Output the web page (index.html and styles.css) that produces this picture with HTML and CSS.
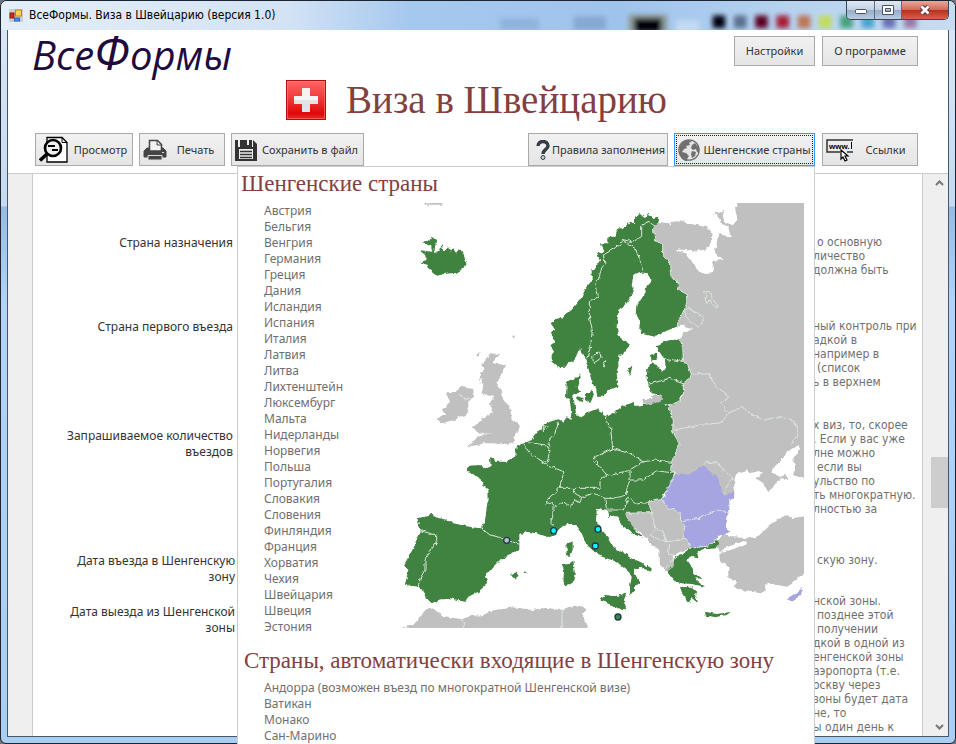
FILE: index.html
```html
<!DOCTYPE html>
<html lang="ru">
<head>
<meta charset="utf-8">
<title>ВсеФормы. Виза в Швейцарию (версия 1.0)</title>
<link rel="stylesheet" href="styles.css">
</head>
<body>
<div class="window">
  <svg class="glass" width="620" height="30" viewBox="0 0 620 30" aria-hidden="true">
    <defs><filter id="soft" x="-20%" y="-50%" width="140%" height="200%"><feGaussianBlur stdDeviation="3"/></filter></defs>
    <g filter="url(#soft)">
      <rect x="160" y="18" width="40" height="12" fill="#8fb2dc"/><rect x="236" y="16" width="34" height="14" fill="#86a8d2"/>
      <rect x="293" y="14" width="40" height="18" fill="#8e9a96"/><rect x="299" y="18" width="28" height="14" fill="#000008"/>
      <rect x="342" y="20" width="24" height="14" fill="#c4daf2"/>
      <rect x="380" y="15" width="13" height="13" fill="#00060c"/><rect x="402" y="15" width="13" height="13" fill="#5b6f8b"/>
      <rect x="424" y="15" width="13" height="13" fill="#5c001e"/><rect x="446" y="15" width="13" height="13" fill="#a51a35"/>
      <rect x="468" y="15" width="13" height="13" fill="#bb7652"/><rect x="490" y="15" width="13" height="13" fill="#c2dc5c"/>
      <rect x="512" y="15" width="13" height="13" fill="#42a17b"/><rect x="534" y="15" width="13" height="13" fill="#4aa2d0"/>
      <rect x="556" y="15" width="13" height="13" fill="#6670b4"/><rect x="578" y="15" width="13" height="13" fill="#9a78a8"/>
    </g>
  </svg>
  <div class="titlebar">
    <svg width="14" height="13" viewBox="0 0 14 13" aria-hidden="true">
      <rect width="14" height="13" fill="#c9cdd2"/>
      <rect x="1" y="4" width="4" height="5" fill="#d22a1c" stroke="#8b1a10"/>
      <rect x="6.500" y="1" width="6" height="6" fill="#fbd24a" stroke="#b98a10"/>
      <rect x="5.500" y="9" width="5" height="3" fill="#4b8ff0" stroke="#2c62b8"/>
    </svg>
    <span class="caption">ВсеФормы. Виза в Швейцарию (версия 1.0)</span>
    <div class="controls">
      <button class="ctl min" aria-label="Свернуть"><svg width="14" height="12" viewBox="0 0 14 12"><rect x="1.500" y="5.500" width="11" height="4" rx="1" fill="#fff" stroke="#4a5468"/></svg></button>
      <button class="ctl max" aria-label="Развернуть"><svg width="14" height="12" viewBox="0 0 14 12"><path fill="#fff" fill-rule="evenodd" stroke="#4a5468" d="M1.500 1.500h11v9h-11zM4.500 4.500h5v3h-5z"/></svg></button>
      <button class="ctl close" aria-label="Закрыть"><svg width="14" height="12" viewBox="0 0 14 12"><path d="M3.500 2.500l7 7m0-7l-7 7" stroke="#5a3038" stroke-width="4.600"/><path d="M3.500 2.500l7 7m0-7l-7 7" stroke="#fff" stroke-width="2.800"/></svg></button>
    </div>
  </div>
  <div class="client">
    <header>
      <div class="top">
        <div class="logo">Все<span class="big">Ф</span>ормы</div>
        <div class="group"><button class="btn settings">Настройки</button><button class="btn about">О программе</button></div>
      </div>
      <div class="heading">
        <svg width="40" height="40" viewBox="0 0 40 40" aria-hidden="true">
          <defs><linearGradient id="red" x2="0" y2="1"><stop stop-color="#ff6666"/><stop offset=".5" stop-color="#f03434"/><stop offset=".85" stop-color="#de0909"/><stop offset="1" stop-color="#e83030"/></linearGradient></defs>
          <rect x=".5" y=".5" width="39" height="39" fill="url(#red)" stroke="#b80d0d"/>
          <rect x="1.500" y="1.500" width="37" height="37" fill="none" stroke="#ff8a8a" stroke-opacity=".5"/>
          <path d="M16 8h8v8h8v8h-8v8h-8v-8H8v-8h8z" fill="#f4f4f4"/><path d="M8 20h24v4h-8v8h-8v-8H8z" fill="#e3e3e3"/>
        </svg>
        <h1>Виза в Швейцарию</h1>
      </div>
      <nav class="toolbar">
        <div class="group">
          <button class="btn tool view">
            <svg width="30" height="28" viewBox="0 0 30 28"><path d="M8 1.500h15l5 5V26H8z" fill="#fff" stroke="#000" stroke-width="1.300"/><path d="M23 1.500v5h5" fill="none" stroke="#000"/><circle cx="14" cy="12" r="8" fill="#eee" stroke="#000" stroke-width="2.600"/><path d="M8 18l-7 6.500" stroke="#000" stroke-width="3.500"/><path d="M9 10h7M13 14h6" stroke="#000" stroke-width="1.800"/></svg>
            <span>Просмотр</span></button>
          <button class="btn tool print">
            <svg width="24" height="22" viewBox="0 0 24 22"><path d="M4 9h16l3 3v6H1v-6z" fill="#444" stroke="#444" stroke-linejoin="round"/><path d="M6.500 12V1.500h8l4 4V12z" fill="#f3f3f3" stroke="#444" stroke-width="1.500"/><path d="M14 1.500V6h4.500" fill="none" stroke="#444"/><path d="M5 16.500h14V21H5z" fill="#444" stroke="#ddd"/><path d="M19 13.500h2" stroke="#ddd"/></svg>
            <span>Печать</span></button>
          <button class="btn tool save">
            <svg width="22" height="22" viewBox="0 0 22 22"><path d="M0 1h18l4 4v17H0z" fill="#333"/><path d="M3 0h2v8H3zM17 0h1v8h-1z" fill="#eee"/><path d="M12 1h2v5h-2z" fill="#eee"/><path d="M4 10h14v10H4z" fill="#eee"/><path d="M5 12.500h12M5 15.500h12M5 18.500h12" stroke="#333" stroke-width="1.400"/></svg>
            <span>Сохранить в файл</span></button>
        </div>
        <div class="group">
          <button class="btn tool rules">
            <svg width="14" height="20" viewBox="0 0 14 20"><path d="M2 6c0-6 10-6 10 0 0 3.500-5 3.500-5 8" fill="none" stroke="#343c46" stroke-width="3.400"/><circle cx="7" cy="17.500" r="2" fill="#ccc" stroke="#343c46"/></svg>
            <span>Правила заполнения</span></button>
          <button class="btn tool schengen">
            <svg width="22" height="22" viewBox="0 0 22 22"><circle cx="11" cy="11" r="10.200" fill="#e4e4e4" stroke="#707070" stroke-width="1.200"/><path d="M2 7l3-4 5-2 4 1-3 2 1 2-4 1 1 2-3 1-2 3 4 1 3 3-2 3v3l-5-3-3-6zM14 6l3-2 4 5v5l-2-1-1-3-3 1-2-2zM14 12l4 1-1 4-3 2-1-4z" fill="#707070"/></svg>
            <span>Шенгенские страны</span></button>
          <button class="btn tool links">
            <svg width="28" height="24" viewBox="0 0 28 24"><path d="M27 2H1v12h13M21 14h6" fill="none" stroke="#333" stroke-width="1.500"/><text x="3" y="11" class="www">www.</text><path d="M25.500 4v7" stroke="#000"/><path d="M15 12v9l2-2 2 4 2-1-2-4h3z" fill="#fff" stroke="#000" stroke-width="1.200"/></svg>
            <span>Ссылки</span></button>
        </div>
      </nav>
    </header>
    <main>
      <div class="form">
        <section class="row r1"><p class="label">Страна назначения</p>
          <p class="hint"><span class="in">о основную</span><span>личество</span><span>должна быть</span></p></section>
        <section class="row r2"><p class="label">Страна первого въезда</p>
          <p class="hint"><span>ный контроль при</span><span>адкой в</span><span>например в</span><span class="in">(список</span><span>ь в верхнем</span></p></section>
        <section class="row r3"><p class="label low">Запрашиваемое количество въездов</p>
          <p class="hint"><span>х виз, то, скорее</span><span>. Если у вас уже</span><span>лне можно</span><span class="in">если вы</span><span>ульство по</span><span>ть многократную.</span><span>лностью за</span></p></section>
        <section class="row r4"><p class="label wide">Дата въезда в Шенгенскую зону</p>
          <p class="hint"><span class="in">скую зону.</span></p></section>
        <section class="row r5"><p class="label wide low">Дата выезда из Шенгенской зоны</p>
          <p class="hint"><span>нской зоны.</span><span class="in">позднее этой</span><span class="in">получении</span><span>дкой в одной из</span><span>енгенской зоны</span><span>аэропорта (т.е.</span><span>оскву через</span><span>зоны будет дата</span><span>не, то</span><span>ы один день к</span></p></section>
      </div>
      <div class="scroll" aria-hidden="true">
        <svg width="9" height="6" viewBox="0 0 9 6"><path d="M1 5l3.500-3.500L8 5" fill="none" stroke="#777" stroke-width="2"/></svg>
        <div class="track"><div class="thumb"></div></div>
        <svg width="9" height="6" viewBox="0 0 9 6"><path d="M1 1l3.500 3.500L8 1" fill="none" stroke="#777" stroke-width="2"/></svg>
      </div>
    </main>
  </div>
  <aside class="popup">
    <h2>Шенгенские страны</h2>
    <div class="countries">
      <ul>
        <li>Австрия</li><li>Бельгия</li><li>Венгрия</li><li>Германия</li><li>Греция</li><li>Дания</li><li>Исландия</li><li>Испания</li><li>Италия</li><li>Латвия</li><li>Литва</li><li>Лихтенштейн</li><li>Люксембург</li><li>Мальта</li><li>Нидерланды</li><li>Норвегия</li><li>Польша</li><li>Португалия</li><li>Словакия</li><li>Словения</li><li>Финляндия</li><li>Франция</li><li>Хорватия</li><li>Чехия</li><li>Швейцария</li><li>Швеция</li><li>Эстония</li>
      </ul>
      <svg class="map" width="401" height="425" viewBox="9 9 1203 1275" role="img" aria-label="Карта Шенгенской зоны">
        <defs><filter id="coast" filterUnits="userSpaceOnUse" x="0" y="0" width="1230" height="1300"><feTurbulence type="fractalNoise" baseFrequency=".07" numOctaves="2" seed="4"/><feDisplacementMap in="SourceGraphic" scale="13" xChannelSelector="R" yChannelSelector="G"/></filter></defs>
        <g filter="url(#coast)">
          <g fill="#c0c0c0">
            <path d="M1016 0L1005 22L1012 60L998 76L975 66L968 50L972 30L950 38L938 40L955 46L962 70L985 80L992 112L965 108L955 100L950 130L944 158L968 180L935 182L942 205L938 220L918 222L892 214L885 195L870 180L855 160L820 148L860 150L885 155L915 148L935 125L938 100L922 82L885 74L860 70L835 64L812 66L810 80L805 70L775 66L760 80L764 120L788 135V165L808 190L812 225L835 250L834 266L863 285L858 315L845 345L830 380L850 372L856 382L877 388L850 398L840 418L848 440L850 480L865 500L874 522L868 540L850 548V590L840 600L820 615H805L820 655L818 695L838 730L825 755L812 790V820H825L970 890L1003 875V838L1015 820L1035 815L1040 808L1050 820L1080 812L1088 822L1068 835L1090 850L1105 877L1125 850L1145 835L1165 838L1160 825L1140 830L1115 818L1118 805L1145 780L1160 760L1180 745L1195 738L1200 745L1180 775L1185 800L1180 825L1195 832L1230 838V0Z"/>
            <path d="M727 597L755 597L760 585H785V608L745 614L730 612ZM672 940L755 938L745 905L780 895L850 930L870 1045L840 1055L815 1070L820 1090L805 1118L780 1095L778 1050L755 1035L745 1015L720 1000L690 975Z"/>
            <path d="M970 1000L1000 1012L1045 1015L1025 1025L985 1040L960 1058L950 1030ZM958 1062L975 1055L1000 1048L1040 1030L1025 1018L1070 1010L1090 995L1120 965L1160 945L1170 955L1230 948V1115L1205 1125L1160 1160L1100 1148L1095 1175L1070 1178L1030 1170L1000 1160L1010 1148L985 1130V1100L960 1085Z"/>
            <path d="M270 460L300 462L275 490L318 495L300 530L288 550L305 570L310 600L330 620L335 660L360 675L355 695L340 710L345 725L320 735L280 730H250L235 735L200 740L225 720L240 708L275 700L245 702L215 682L235 670L245 655L275 640L270 610L280 590L245 580L250 555L240 530L250 510L245 490L262 478Z"/>
            <path d="M110 655L140 640L125 630L150 605L138 580L165 578L180 560L220 567L222 590L205 605V640L160 660L125 670L110 660ZM228 465L242 455L235 470ZM240 530L235 555L244 530ZM60 4H142L125 14H80ZM335 410H346L340 416Z"/>
            <path d="M5 1284L40 1275L65 1245L90 1220L105 1230L130 1248L185 1258L215 1248L250 1245L285 1230L340 1222L400 1230L430 1222L480 1230L520 1218H540L560 1228L545 1245L560 1270V1300H0Z"/>
          </g>
          <g fill="#418341">
            <path d="M52 955L95 942L105 950L140 960L160 970L215 982L245 985L255 960L262 910L266 900L265 870L248 855L245 838L215 820L200 815L205 797L240 795L255 805L272 800L270 772L282 775L285 785H315L345 770L350 740L372 730L395 720L410 700L430 675L450 665L475 658L490 665L500 652L515 660L512 620L508 600L498 590L500 545L515 538L532 535L540 520L542 535L530 560L540 575L520 585L522 600L525 620L530 650L545 650L560 640L590 628L605 635L610 645L620 650L640 640L665 620L700 605L710 618L725 615L785 608L805 618L820 660L818 695L838 730L815 785L812 812L825 820L805 865L782 895L745 905L755 938L675 940L685 965L705 990L730 1015L700 1002L665 975L655 950L635 945L628 955L620 930L600 925L590 930L588 960L605 990L625 1010L640 1040L660 1055L685 1060V1070L720 1085L755 1105L752 1115L720 1100L705 1110V1125L722 1145L705 1160V1175L690 1185V1160L695 1130L685 1115L650 1085L600 1068L560 1035L545 1000L530 980L505 970L480 985L465 1002L440 1012L410 1000L380 995L358 1005V1045L330 1065L300 1080L275 1105L255 1130L265 1148L235 1175L205 1190L195 1205L150 1195L115 1200L95 1210L80 1195L75 1175L55 1160L15 1155L25 1110L12 1095L40 1045L62 995Z"/>
            <path d="M475 502L455 485V465L462 455L450 435L465 425L452 395L466 390L452 370L480 350L487 357L495 340L515 330L540 300L555 270L575 245V210L588 200L600 180L590 160L612 155L600 130L625 130V110L645 110L655 85L675 85L690 65L705 70V50L720 42L735 55L745 38L760 55L775 50L770 75L760 80L764 120L788 135V165L808 190L812 225L835 250L834 266L863 285L858 315L830 380L800 392L765 410L720 400L722 370L710 345L712 315L735 280L740 258L755 240L745 220L718 217L700 225L695 255L702 275L680 310L655 330L650 380L655 405L680 425L690 435L670 460L655 465V500L650 520L655 560L620 570L610 590H592L588 565L575 545L565 505L560 480L545 460L540 442L535 462L520 480L495 500Z"/>
            <path d="M770 436L800 422L840 418L848 440L850 480L865 500L874 522L868 540L850 548V580L840 600L820 615H805L785 608V585L755 580L745 555L740 535L742 508L755 490L770 495L785 515L797 505L795 480L778 455ZM687 500L697 498L690 528L684 520ZM750 465L770 460L772 475L755 482ZM555 585L575 572L580 590L570 610L555 600ZM532 588L548 595L545 605L532 600Z"/>
            <path d="M58 187L80 180L75 165L58 150L95 155L100 145L107 160L120 148L125 135L130 152L145 142L150 155L160 148L168 158L180 145L188 160L200 185L190 205L170 218L140 221L110 228L85 208L80 195ZM66 125L88 122L95 110L108 120L104 150L95 150L93 132L85 138Z"/>
            <path d="M500 1035L518 1023V1050L510 1072L500 1060ZM485 1095L505 1092L520 1082L525 1120L518 1148L500 1158L490 1150L492 1110ZM600 1195L615 1185L650 1188L680 1178L672 1200L675 1228L655 1225L605 1202ZM333 1123L348 1117L356 1127L345 1136ZM368 1117L380 1119L376 1123ZM915 1235L950 1242L992 1236L980 1245L945 1252L918 1247Z"/>
            <path d="M820 1075L850 1060L870 1045L925 1038L945 1028L950 1018L958 1030L950 1045L910 1048L890 1055L895 1075L870 1070L862 1080L878 1105L880 1120L912 1137L885 1135L915 1160L875 1152L845 1150L825 1145L803 1118L818 1095ZM840 1162L875 1160L892 1175L885 1185L895 1210L875 1195L865 1210L855 1190L845 1175Z"/>
          </g>
          <path fill="#a5a5e1" d="M825 822L875 820L910 795L935 820L955 835L962 865L970 885L990 878L1003 875L1002 892L988 900L988 935L980 950L975 975L985 1000L955 1008L945 1025L925 1038L870 1045L865 1025L848 1010L855 980L842 960L840 935L805 925L782 898L795 885L810 845ZM1160 1198L1175 1190L1190 1178L1210 1160L1200 1185L1180 1205Z"/>
          <g fill="none" stroke="#dce7dc" stroke-width="3">
            <path d="M560 475L572 440L577 390L568 350V305L595 290L588 250L600 225L605 200L615 190L610 165L660 135L665 118L695 125L725 110V75L745 65L765 78M665 118L705 145L720 180L728 212M580 490L578 465L600 458L603 475ZM612 502L610 488L618 478Z"/>
            <path d="M760 80L764 120L788 135V165L808 190L812 225L835 250L834 266L863 285L858 315L830 380M840 418L848 440L850 480L865 500L874 522L868 540L850 548V580L840 600L805 618L820 660L818 695L838 730L815 785L812 812L825 820L805 865L782 895L745 905L755 938L675 940"/>
            <path d="M60 992L110 1005V1025L90 1055L75 1080V1110L60 1135L55 1160M245 985L270 1005L305 1013L358 1033M372 735L390 760L420 780L440 793L465 805L492 815L478 865L440 900V910L460 905L458 950L452 970L470 985M385 728L440 735L450 755L440 790M475 665L465 700L445 720L450 740M430 675L442 680L430 695ZM478 865H520L525 880L545 892L540 908L525 900L510 920L490 905L470 920L458 915M520 865H600V845L620 825L580 775L638 745M620 640V665L632 685L638 745L700 765L730 785L770 780L815 787M620 820L635 825L685 812L730 785M690 812V840L680 865V885L640 895H615L580 880L545 892M690 840H730L770 812L825 820M615 898L620 930M620 930H670L685 892L710 912L745 908M795 1108L820 1075"/>
            <path d="M795 478L835 485L850 480M748 552L810 535L850 548M874 522H925L950 560L985 590L965 610L985 640L965 668L900 675L822 690M985 640L1030 618L1040 635L1090 660L1140 650L1180 660L1195 700L1175 730M910 790L950 785L970 810L1000 835L980 860L975 880M755 938L765 985L750 1005L780 1020L800 1025L790 995L770 985M800 1025L840 1020L860 1015M805 1030V1060L820 1070M845 962L900 955L950 930L988 935M858 330L865 325L910 350L908 372L892 382L857 350ZM908 273L930 280L935 295L955 318L950 328L930 300L920 310L915 295L925 290ZM195 1284L185 1258M485 1284L487 1230M175 580L200 598L222 590M782 895L805 925L840 935L842 960L855 980L848 1010L865 1025L870 1045L925 1038L945 1025L955 1008"/>
          </g>
        </g>
        <g stroke="#173b48" stroke-width="4"><g fill="#00ffff"><circle cx="461" cy="992" r="9"/><circle cx="594" cy="988" r="9"/><circle cx="586" cy="1038" r="9"/></g><circle cx="320" cy="1021" r="9" fill="#c0c0c0"/><circle cx="654" cy="1251" r="9" fill="#418341"/></g>
      </svg>
    </div>
    <h2 class="second">Страны, автоматически входящие в Шенгенскую зону</h2>
    <ul><li>Андорра (возможен въезд по многократной Шенгенской визе)</li><li>Ватикан</li><li>Монако</li><li>Сан-Марино</li></ul>
  </aside>
</div>
</body>
</html>
```
FILE: styles.css
```css
* { box-sizing: border-box; }
html, body { height: 100%; margin: 0; }
body {
  background: #70757c;
  overflow: hidden;
  font: 12px/16px "Noto Sans", "DejaVu Sans Condensed", sans-serif;
  color: #333;
}
h1, h2, p, ul { margin: 0; padding: 0; font-weight: normal; }
ul { list-style: none; }
button { font: inherit; color: inherit; }

.window {
  position: relative;
  display: flex;
  flex-direction: column;
  height: 100%;
  padding: 0 6px 6px;
  border: 1px solid #1b2430;
  border-radius: 7px 7px 6px 6px;
  background: linear-gradient(#dbe8f6 0, #c5daf0 205px, #96bbe2 206px, #b2d3f7 300px, #aacdf2 100%);
}
.window::before {
  content: "";
  position: absolute;
  inset: 0 0 auto 0;
  height: 29px;
  border-radius: 6px 6px 0 0;
  background: linear-gradient(90deg, #e4eef8, #d3e3f5 30%, #a5c8ee 43%, #9fc4ec 65%, #b9d4f0 85%, #c8dcf2);
}
.glass { position: absolute; right: 0; top: 0; width: 620px; height: 29px; }
.titlebar { position: relative; display: flex; align-items: center; flex: none; height: 28px; padding-left: 2px; gap: 6px; }
.caption { flex: 1; color: #000; font-family: "DejaVu Sans Condensed", sans-serif; }
.controls {
  display: flex;
  align-self: flex-start;
  height: 19px;
  border: 1px solid #3c4656;
  border-top: 0;
  border-radius: 0 0 5px 5px;
  overflow: hidden;
}
.ctl {
  display: flex;
  align-items: center;
  justify-content: center;
  width: 28px;
  padding: 0;
  border: 0;
  border-right: 1px solid #5e6c80;
  background: linear-gradient(#dfe8f2, #c2d0e2 50%, #98adc6 52%, #b8cde2);
}
.ctl.max { width: 27px; }
.ctl.close { width: 46px; border-right: 0; background: linear-gradient(#e8a99c, #d5695a 48%, #b8301e 52%, #d8604a); }

.client { display: flex; flex-direction: column; flex: 1; min-height: 0; border: 1px solid #46566c; background: #fff; }
header { flex: none; height: 144px; padding: 0 30px 0 27px; border-bottom: 1px solid #ccc; }
.top { display: flex; justify-content: space-between; height: 50px; }
.logo { margin-left: -3px; color: #200b3e; font: italic 40px/44px "Open Sans", sans-serif; }
.logo .big { font-size: 48px; }
.group { display: flex; gap: 6px; }
.btn {
  display: flex;
  align-items: center;
  justify-content: center;
  height: 33px;
  padding: 0;
  border: 1px solid #a9a9a9;
  background: linear-gradient(#f1f1f1, #e5e5e5);
  font-size: 11px;
}
.top .group { padding-top: 6px; gap: 7px; }
.top .btn { height: 30px; }
.settings { width: 81px; }
.about { width: 96px; }
.heading { display: flex; justify-content: center; align-items: center; height: 40px; gap: 20px; }
h1 { color: #83403f; font: 39px/44px "Liberation Serif", serif; white-space: nowrap; }
.toolbar { display: flex; justify-content: space-between; padding-top: 13px; }
.tool span { flex: 1; white-space: nowrap; }
.tool svg { flex: none; margin-left: 3px; }
.view { width: 98px; }
.print { width: 86px; }
.save { width: 133px; }
.rules { width: 140px; }
.rules svg { margin-left: 7px; }
.schengen { width: 141px; border-color: #3399ff; outline: 1px dotted #222; outline-offset: -3px; }
.links { width: 96px; }
.toolbar .group:last-child .links { margin-left: 1px; }
.www { font: bold 8px "Liberation Sans", sans-serif; }

main { display: flex; flex: 1; min-height: 0; padding-left: 24px; background: #efefef; }
.form { flex: 1; min-width: 0; overflow: hidden; padding-top: 61px; border: solid #ccc; border-width: 0 1px; background: #fff; }
.row { display: flex; justify-content: space-between; }
.r1 { height: 84px; }
.r2 { height: 99px; }
.r3 { height: 135px; }
.r4 { height: 41px; }
.r5 { height: 149px; }
.label { width: 200px; padding-left: 30px; text-align: right; }
.label.wide { width: 202px; }
.label.low { padding-top: 10px; }
.hint { width: 109px; color: #6f6f6f; font: 12px/14px "DejaVu Sans Condensed", sans-serif; white-space: nowrap; }
.hint span { display: block; }
.hint .in { padding-left: 4px; }
.scroll { display: flex; flex-direction: column; align-items: flex-end; width: 25px; padding: 6px 0; }
.scroll svg { margin-right: 4px; }
.track { flex: 1; width: 17px; padding-top: 271px; }
.thumb { height: 51px; background: #cdcdcd; }

.popup {
  position: absolute;
  top: 165px;
  right: 140px;
  bottom: -1px;
  left: 236px;
  overflow: hidden;
  border: 1px solid #ccc;
  border-bottom: 0;
  background: #fff;
  color: #6f6f6f;
}
h2 { padding-left: 3px; color: #83403f; font: 23px/34px "Liberation Serif", serif; white-space: nowrap; }
.popup ul { padding-left: 26px; }
.countries { display: flex; justify-content: space-between; height: 443px; padding: 2px 10px 0 0; }
.second { padding-left: 6px; margin-bottom: 2px; }
```
